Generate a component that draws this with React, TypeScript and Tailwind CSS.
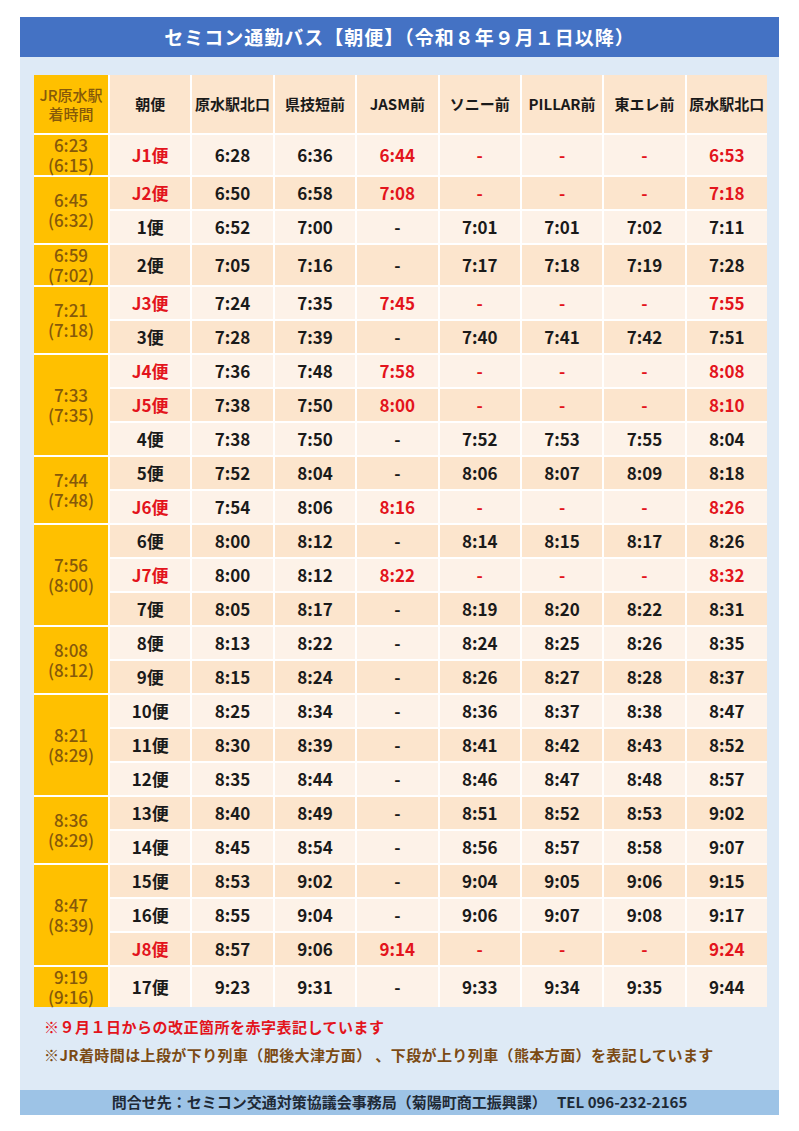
import React from "react";

type Row = { name: string; red: boolean; t: string[] };
type Group = { a: string; b: string; rows: Row[] };

const r = (name: string, ...t: string[]): Row => ({ name, red: name.startsWith("J"), t });

const groups: Group[] = [
  { a: "6:23", b: "(6:15)", rows: [r("J1便", "6:28", "6:36", "6:44", "-", "-", "-", "6:53")] },
  {
    a: "6:45",
    b: "(6:32)",
    rows: [
      r("J2便", "6:50", "6:58", "7:08", "-", "-", "-", "7:18"),
      r("1便", "6:52", "7:00", "-", "7:01", "7:01", "7:02", "7:11"),
    ],
  },
  { a: "6:59", b: "(7:02)", rows: [r("2便", "7:05", "7:16", "-", "7:17", "7:18", "7:19", "7:28")] },
  {
    a: "7:21",
    b: "(7:18)",
    rows: [
      r("J3便", "7:24", "7:35", "7:45", "-", "-", "-", "7:55"),
      r("3便", "7:28", "7:39", "-", "7:40", "7:41", "7:42", "7:51"),
    ],
  },
  {
    a: "7:33",
    b: "(7:35)",
    rows: [
      r("J4便", "7:36", "7:48", "7:58", "-", "-", "-", "8:08"),
      r("J5便", "7:38", "7:50", "8:00", "-", "-", "-", "8:10"),
      r("4便", "7:38", "7:50", "-", "7:52", "7:53", "7:55", "8:04"),
    ],
  },
  {
    a: "7:44",
    b: "(7:48)",
    rows: [
      r("5便", "7:52", "8:04", "-", "8:06", "8:07", "8:09", "8:18"),
      r("J6便", "7:54", "8:06", "8:16", "-", "-", "-", "8:26"),
    ],
  },
  {
    a: "7:56",
    b: "(8:00)",
    rows: [
      r("6便", "8:00", "8:12", "-", "8:14", "8:15", "8:17", "8:26"),
      r("J7便", "8:00", "8:12", "8:22", "-", "-", "-", "8:32"),
      r("7便", "8:05", "8:17", "-", "8:19", "8:20", "8:22", "8:31"),
    ],
  },
  {
    a: "8:08",
    b: "(8:12)",
    rows: [
      r("8便", "8:13", "8:22", "-", "8:24", "8:25", "8:26", "8:35"),
      r("9便", "8:15", "8:24", "-", "8:26", "8:27", "8:28", "8:37"),
    ],
  },
  {
    a: "8:21",
    b: "(8:29)",
    rows: [
      r("10便", "8:25", "8:34", "-", "8:36", "8:37", "8:38", "8:47"),
      r("11便", "8:30", "8:39", "-", "8:41", "8:42", "8:43", "8:52"),
      r("12便", "8:35", "8:44", "-", "8:46", "8:47", "8:48", "8:57"),
    ],
  },
  {
    a: "8:36",
    b: "(8:29)",
    rows: [
      r("13便", "8:40", "8:49", "-", "8:51", "8:52", "8:53", "9:02"),
      r("14便", "8:45", "8:54", "-", "8:56", "8:57", "8:58", "9:07"),
    ],
  },
  {
    a: "8:47",
    b: "(8:39)",
    rows: [
      r("15便", "8:53", "9:02", "-", "9:04", "9:05", "9:06", "9:15"),
      r("16便", "8:55", "9:04", "-", "9:06", "9:07", "9:08", "9:17"),
      r("J8便", "8:57", "9:06", "9:14", "-", "-", "-", "9:24"),
    ],
  },
  { a: "9:19", b: "(9:16)", rows: [r("17便", "9:23", "9:31", "-", "9:33", "9:34", "9:35", "9:44")] },
];

const headers = ["朝便", "原水駅北口", "県技短前", "JASM前", "ソニー前", "PILLAR前", "東エレ前", "原水駅北口"];

const spanClass: Record<number, string> = { 1: "row-span-1", 2: "row-span-2", 3: "row-span-3" };

export default function App() {
  let idx = 0;
  const cells: React.ReactNode[] = [];
  groups.forEach((g, gi) => {
    cells.push(
      <div
        key={`g${gi}`}
        className={`${spanClass[g.rows.length]} col-start-1 bg-[#FFC000] text-[#86590A] font-medium flex flex-col items-center justify-center text-[17px] leading-[20px] min-h-[40px]`}
      >
        <span>{g.a}</span>
        <span>{g.b}</span>
      </div>
    );
    g.rows.forEach((row) => {
      const bg = idx % 2 === 0 ? "bg-[#FDF2E8]" : "bg-[#FCE5CD]";
      idx++;
      const vals = [row.name, ...row.t];
      vals.forEach((v, ci) => {
        const red = row.red && (ci === 0 || ci >= 3);
        cells.push(
          <div
            key={`r${idx}-${ci}`}
            className={`${bg} min-h-[32px] flex items-center justify-center text-[17px] ${
              red ? "text-[#E3141C]" : "text-[#1a1a1a]"
            }`}
          >
            {v}
          </div>
        );
      });
    });
  });

  return (
    <div
      className="w-[799px] min-h-[1131px] bg-white pt-[17px] font-bold"
      style={{ fontFamily: '"Noto Sans CJK JP", "Noto Sans", sans-serif' }}
    >
      <div className="mx-[20px] bg-[#DEEAF6]">
        <div className="h-[40px] bg-[#4472C4] flex items-center justify-center text-white text-[19px] tracking-[1px]">
          セミコン通勤バス【朝便】（令和８年９月１日以降）
        </div>
        <div className="pt-[18px] pl-[14px] pr-[12px]">
          <div className="grid grid-cols-[74px_repeat(8,minmax(0,1fr))] gap-[2px] bg-white">
            <div className="h-[58px] bg-[#FFC000] text-[#86590A] font-medium flex flex-col items-center justify-center text-[15px] leading-[19px]">
              <span>JR原水駅</span>
              <span>着時間</span>
            </div>
            {headers.map((h, i) => (
              <div
                key={i}
                className="h-[58px] bg-[#FCE5CD] text-[#1a1a1a] flex items-center justify-center text-[15px] whitespace-nowrap"
              >
                {h}
              </div>
            ))}
            {cells}
          </div>
          <div className="pl-[10px] pt-[10px] text-[15px] leading-[20px]">
            <div className="text-[#E3141C] tracking-[0.5px]">※９月１日からの改正箇所を赤字表記しています</div>
            <div className="mt-[8px] text-[#7B4A14] tracking-[0.4px]">
              ※JR着時間は上段が下り列車（肥後大津方面） 、下段が上り列車（熊本方面）を表記しています
            </div>
          </div>
        </div>
        <div className="h-[25px] mt-[25px] bg-[#9DC3E6] flex items-center justify-center text-[15px] text-[#1F2A36] whitespace-pre">
          問合せ先：セミコン交通対策協議会事務局（菊陽町商工振興課）   TEL 096-232-2165
        </div>
      </div>
    </div>
  );
}
